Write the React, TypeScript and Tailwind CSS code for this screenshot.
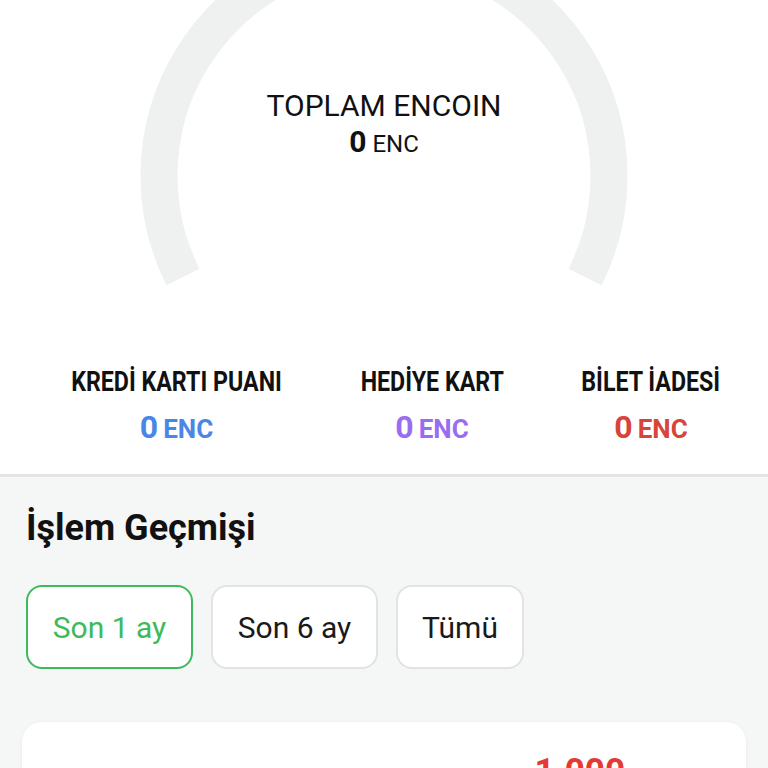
import React from "react";

export default function App() {
  return (
    <div className="w-[768px] h-[768px] overflow-hidden bg-[#f5f6f6]" style={{ fontFamily: "Roboto, 'Noto Sans', sans-serif" }}>
      <div className="bg-white border-b-[3px] border-[#e3e4e4]">
        <div className="relative h-[368px]">
          <svg className="absolute left-0 top-0" width="768" height="368" viewBox="0 0 768 368">
            <path
              d="M 183 277 A 225 225 0 1 1 585 277"
              fill="none"
              stroke="#eef1f0"
              strokeWidth="37"
            />
          </svg>
          <div className="relative flex flex-col items-center pt-[87px] text-[#111]">
            <div className="text-[30px] leading-[38px]">TOPLAM ENCOIN</div>
            <div className="leading-[34px]">
              <span className="text-[30px] font-bold">0</span>
              <span className="text-[24px]"> ENC</span>
            </div>
          </div>
        </div>
        <div className="flex justify-between pl-[71px] pr-[48px] pb-[24px]">
          <Stat label="KREDİ KARTI PUANI" width="w-[211px]" color="text-[#4a86e8]" />
          <Stat label="HEDİYE KART" width="w-[143px]" color="text-[#9a6cf2]" />
          <Stat label="BİLET İADESİ" width="w-[138px]" color="text-[#d8443a]" />
        </div>
      </div>
      <div className="px-[26px] pt-[31px]">
        <div className="text-[36px] font-bold leading-[40px] text-[#111]">İşlem Geçmişi</div>
        <div className="flex gap-[18px] mt-[37px]">
          <button className="h-[84px] w-[167px] rounded-[16px] border-2 border-[#3dbb5a] bg-white text-[30px] text-[#3dbb5a]">Son 1 ay</button>
          <button className="h-[84px] w-[167px] rounded-[16px] border-2 border-[#e2e3e3] bg-white text-[30px] text-[#1a1a1a]">Son 6 ay</button>
          <button className="h-[84px] w-[128px] rounded-[16px] border-2 border-[#e2e3e3] bg-white text-[30px] text-[#1a1a1a]">Tümü</button>
        </div>
      </div>
      <div className="mx-[22px] mt-[53px] h-[200px] rounded-[20px] bg-white shadow-[0_1px_4px_rgba(0,0,0,0.06)] flex justify-end pr-[121px] pt-[31px]">
        <div className="text-[35px] font-bold leading-[38px] text-[#e53935]">-1.000</div>
      </div>
    </div>
  );
}

function Stat({ label, color, width }: { label: string; color: string; width: string }) {
  return (
    <div className={`flex flex-col items-center ${width}`}>
      <div className="whitespace-nowrap text-[27px] font-bold leading-[28px] text-[#111] scale-x-[0.86]">{label}</div>
      <div className={`mt-[14px] whitespace-nowrap font-bold leading-[34px] ${color}`}>
        <span className="text-[32px]">0</span>
        <span className="text-[26px] ml-[5px]">ENC</span>
      </div>
    </div>
  );
}
